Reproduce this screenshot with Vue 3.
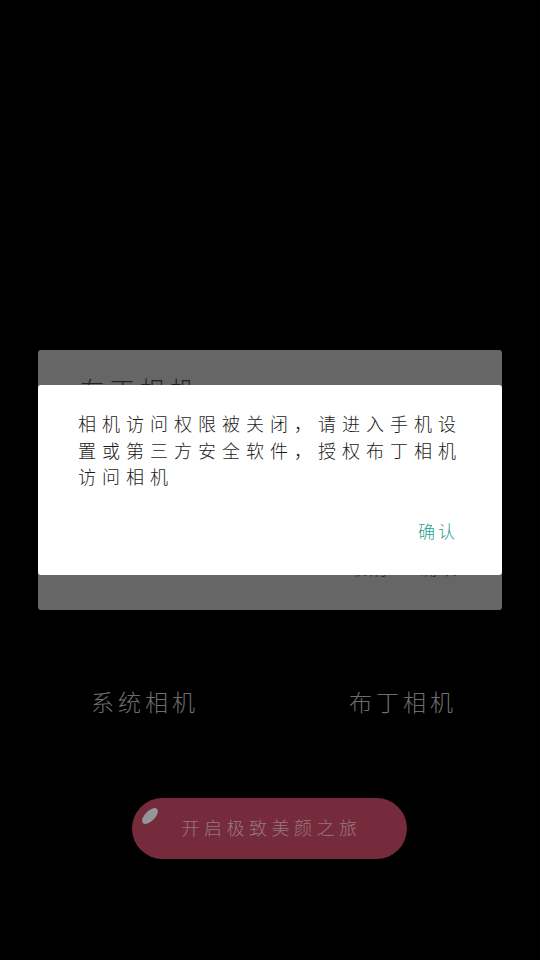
<script setup>
const message = '相机访问权限被关闭，请进入手机设置或第三方安全软件，授权布丁相机访问相机'
</script>

<template>
  <div class="screen">
    <section class="card">
      <h2 class="card-title">布丁相机</h2>
      <div class="card-actions"><span>取消</span><span>确认</span></div>

      <div class="dialog">
        <p class="dialog-text">{{ message }}</p>
        <div class="dialog-actions"><span class="confirm">确认</span></div>
      </div>
    </section>

    <div class="choices">
      <span>系统相机</span>
      <span>布丁相机</span>
    </div>

    <button class="start">
      <i class="shine"></i>
      开启极致美颜之旅
    </button>
  </div>
</template>

<style scoped>
.screen {
  width: 540px;
  height: 960px;
  box-sizing: border-box;
  padding-top: 350px;
  background: #000;
  overflow: hidden;
  font-family: "Noto Sans CJK SC", "Noto Sans", sans-serif;
  font-weight: 300;
  display: flex;
  flex-direction: column;
  align-items: center;
}
.card {
  position: relative;
  width: 464px;
  height: 260px;
  box-sizing: border-box;
  padding: 22px 42px 0;
  background: #666;
  border-radius: 3px;
  display: flex;
  flex-direction: column;
}
.card-title {
  margin: 0;
  font-size: 24px;
  font-weight: 300;
  line-height: 34px;
  letter-spacing: 6px;
  color: #222;
}
.card-actions {
  margin-top: 148px;
  margin-right: 1px;
  display: flex;
  justify-content: flex-end;
  gap: 30px;
  font-size: 18px;
  line-height: 26px;
  letter-spacing: 2px;
  color: #222;
}
.dialog {
  position: absolute;
  left: 0;
  right: 0;
  top: 35px;
  height: 189.5px;
  box-sizing: border-box;
  padding: 25px 44px 0 40px;
  background: #fff;
  border-radius: 3px;
  display: flex;
  flex-direction: column;
}
.dialog-text {
  margin: 0;
  width: 386px;
  font-size: 18px;
  line-height: 26.5px;
  letter-spacing: 6px;
  color: #1a1a1a;
}
.dialog-actions {
  margin-top: 29px;
  display: flex;
  justify-content: flex-end;
}
.confirm {
  font-size: 17px;
  line-height: 24px;
  letter-spacing: 3px;
  color: #1fa08e;
}
.choices {
  width: 366px;
  margin-top: 76px;
  margin-left: 8px;
  display: flex;
  justify-content: space-between;
  font-size: 23px;
  line-height: 30px;
  letter-spacing: 4px;
  color: #6e6e6e;
}
.start {
  position: relative;
  width: 275px;
  height: 61px;
  margin-top: 82px;
  margin-right: 2px;
  padding: 0 0 4px 5px;
  border: 0;
  border-radius: 31px;
  background: #762b3c;
  font-family: inherit;
  font-weight: 300;
  font-size: 18px;
  letter-spacing: 4.5px;
  color: #96787e;
}
.shine {
  position: absolute;
  left: 8px;
  top: 13px;
  width: 20px;
  height: 10px;
  border-radius: 50%;
  background: #96969a;
  transform: rotate(-45deg);
}
</style>
